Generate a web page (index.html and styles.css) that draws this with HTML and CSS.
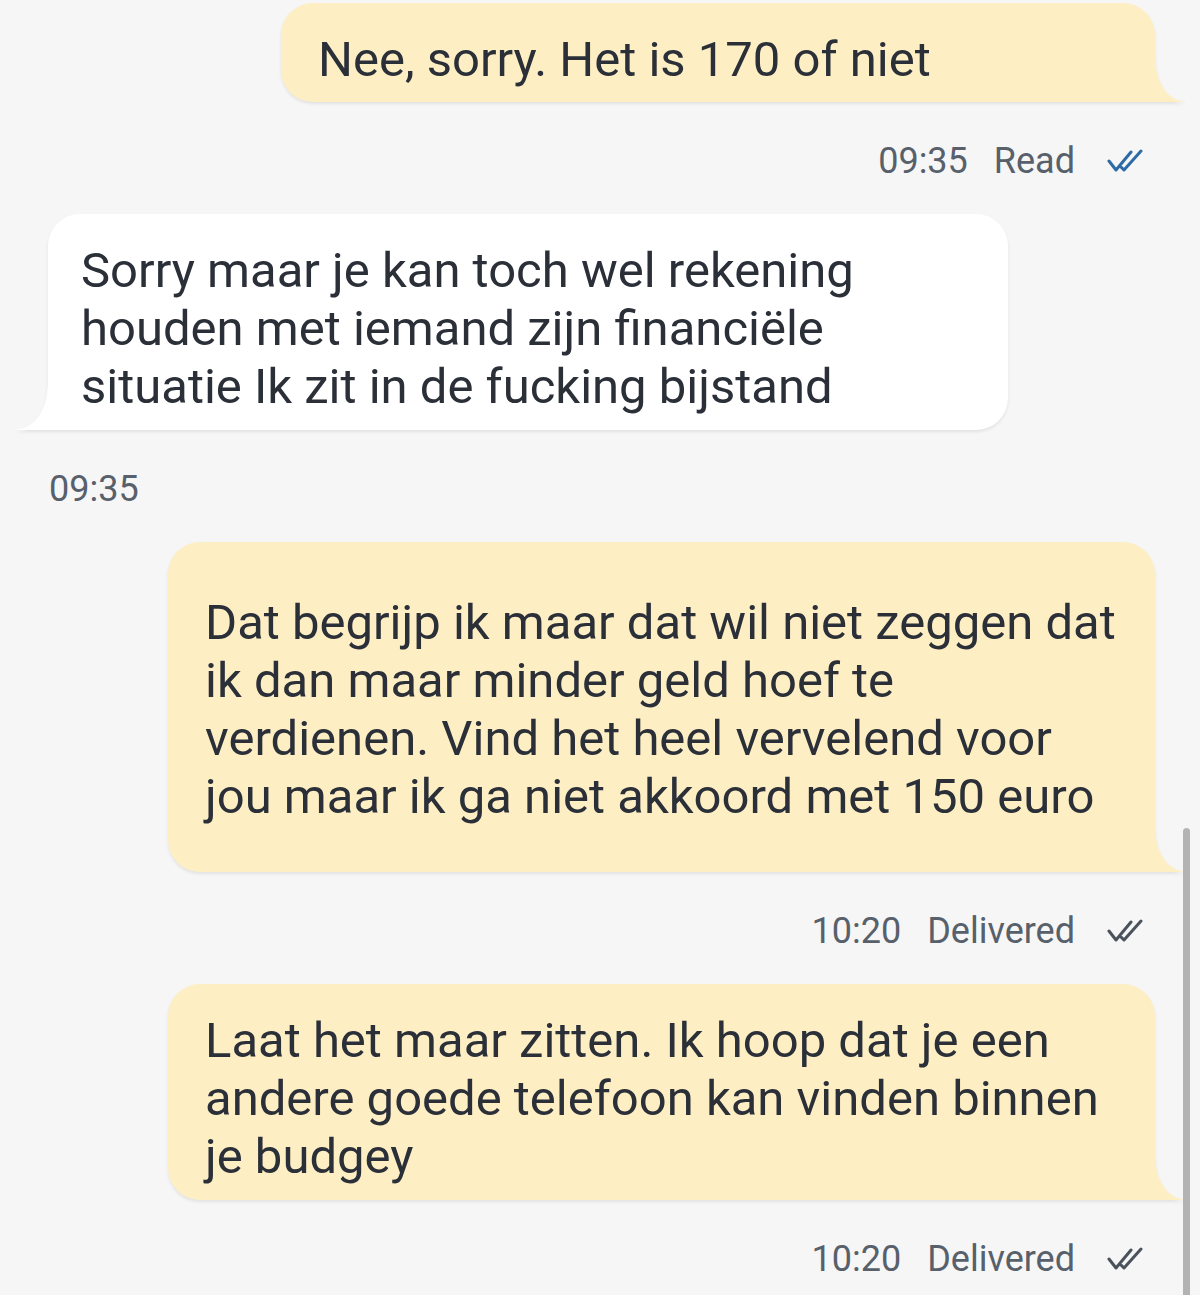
FILE: index.html
```html
<!DOCTYPE html>
<html lang="nl">
<head>
    <meta charset="UTF-8">
    <meta name="viewport" content="width=device-width, initial-scale=1.0">
    <title>Chat</title>
    <link rel="stylesheet" href="styles.css">
</head>
<body>
    <div class="chat">
        <div class="bubble sent first">Nee, sorry. Het is 170 of niet</div>
        <div class="meta">
            <span>09:35</span>
            <span>Read</span>
            <svg class="ticks read" viewBox="0 0 38 24" width="38" height="24"><path d="M2 12 L9 21 L24 3 M14 18 L17 21 L34 2"/></svg>
        </div>

        <div class="bubble received">Sorry maar je kan toch wel rekening houden met iemand zijn financiële situatie Ik zit in de fucking bijstand</div>
        <div class="meta left">
            <span>09:35</span>
        </div>

        <div class="bubble sent tall">Dat begrijp ik maar dat wil niet zeggen dat ik dan maar minder geld hoef te verdienen. Vind het heel vervelend voor jou maar ik ga niet akkoord met 150 euro</div>
        <div class="meta">
            <span>10:20</span>
            <span>Delivered</span>
            <svg class="ticks" viewBox="0 0 38 24" width="38" height="24"><path d="M2 12 L9 21 L24 3 M14 18 L17 21 L34 2"/></svg>
        </div>

        <div class="bubble sent">Laat het maar zitten. Ik hoop dat je een andere goede telefoon kan vinden binnen je budgey</div>
        <div class="meta">
            <span>10:20</span>
            <span>Delivered</span>
            <svg class="ticks" viewBox="0 0 38 24" width="38" height="24"><path d="M2 12 L9 21 L24 3 M14 18 L17 21 L34 2"/></svg>
        </div>
    </div>

    <div class="scrollbar"></div>
</body>
</html>
```

FILE: styles.css
```css
body {
    margin: 0;
    background-color: #f6f6f6;
    font-family: Roboto, "Noto Sans", "Liberation Sans", sans-serif;
    color: #2a2f38;
    overflow: hidden;
}
.chat {
    display: flex;
    flex-direction: column;
    padding: 3px 45px 0 48px;
}
.bubble {
    position: relative;
    box-sizing: border-box;
    font-size: 49px;
    line-height: 58px;
    padding: 28px 35px 14px 37px;
    border-radius: 32px;
    filter: drop-shadow(0 2px 1.5px rgba(0, 0, 0, 0.08));
}
.bubble + .meta {
    margin-top: 39px;
}
.meta + .bubble {
    margin-top: 33px;
}
.bubble.sent {
    align-self: flex-end;
    width: 987px;
    background-color: #feeec4;
    border-bottom-right-radius: 0;
}
.bubble.sent::after {
    content: "";
    position: absolute;
    right: -30px;
    bottom: 0;
    width: 30px;
    height: 42px;
    background: radial-gradient(ellipse 30px 42px at 100% 0, transparent 97%, #feeec4 100%);
}
.bubble.sent.first {
    width: 874px;
    padding-bottom: 13px;
}
.bubble.sent.tall {
    padding-top: 52px;
    padding-bottom: 46px;
}
.bubble.received {
    align-self: flex-start;
    width: 960px;
    padding-left: 33px;
    padding-right: 34px;
    background-color: #ffffff;
    border-bottom-left-radius: 0;
}
.bubble.received::before {
    content: "";
    position: absolute;
    left: -32px;
    bottom: 0;
    width: 32px;
    height: 44px;
    background: radial-gradient(ellipse 32px 44px at 0 0, transparent 97%, #ffffff 100%);
}
.meta {
    display: flex;
    justify-content: flex-end;
    align-items: center;
    gap: 26px;
    height: 40px;
    margin-right: 10px;
    font-size: 36px;
    color: #57606b;
}
.meta.left {
    justify-content: flex-start;
    margin-right: 0;
    margin-left: 1px;
}
.ticks {
    margin-left: 6px;
    color: #4a525c;
}
.ticks path {
    fill: none;
    stroke: currentColor;
    stroke-width: 3;
    stroke-linecap: round;
    stroke-linejoin: round;
}
.ticks.read {
    color: #2e6aa6;
}
.scrollbar {
    position: fixed;
    top: 828px;
    bottom: 0;
    right: 10px;
    width: 7px;
    border-radius: 4px 4px 0 0;
    background-color: #b3b3b3;
}
```
